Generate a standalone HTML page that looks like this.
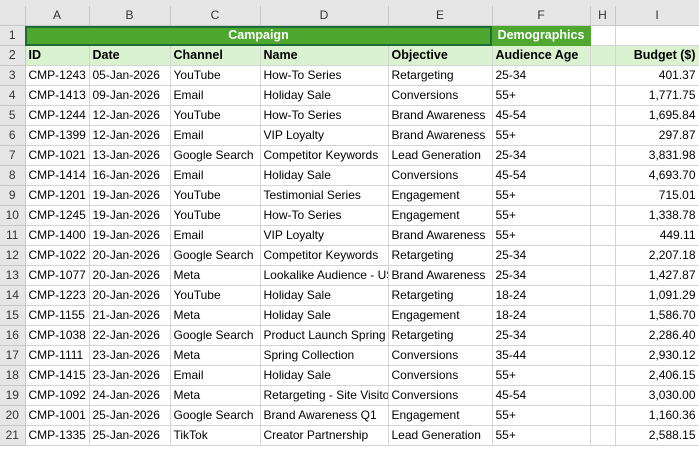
<!DOCTYPE html><html><head><style>
body{margin:0;width:699px;height:449px;overflow:hidden;background:#fff;font-family:"Liberation Sans",sans-serif;font-size:12px;color:#000}
table{border-collapse:collapse;table-layout:fixed;position:absolute;left:0;top:6px;width:699px}
td{height:19px;border-right:1px solid #d4d4d4;border-bottom:1px solid #d4d4d4;padding:0 3px;white-space:nowrap;overflow:hidden;line-height:19px}
.ch td{background:#e6e6e6;color:#333;text-align:center;height:18px;border-color:#c8c8c8;font-size:12px}
td.rh{background:#e6e6e6;color:#333;text-align:center;border-color:#c8c8c8;padding:0;font-size:12px}
.r1 td.g{background:#4ea72e;color:#fff;font-weight:bold;text-align:center;font-size:12.5px;border-color:#4ea72e}
.r2 td{background:#daf2d0;font-weight:bold;font-size:12.5px}
.r td.n{text-align:right}
</style></head><body>
<div style="position:absolute;left:0;top:0;width:699px;height:6px;background:#e6e6e6"></div>
<table>
<colgroup><col style="width:25px"><col style="width:64px"><col style="width:81px"><col style="width:90px"><col style="width:128px"><col style="width:104px"><col style="width:98px"><col style="width:25px"><col style="width:84px"></colgroup>
<tr class="ch"><td></td><td>A</td><td>B</td><td>C</td><td>D</td><td>E</td><td>F</td><td>H</td><td>I</td></tr>
<tr class="r1"><td class="rh">1</td><td class="g" colspan="5" style="outline:2px solid #1e6b3a;outline-offset:-2px">Campaign</td><td class="g">Demographics</td><td></td><td></td></tr>
<tr class="r2"><td class="rh" style="font-weight:normal;background:#e6e6e6">2</td><td>ID</td><td>Date</td><td>Channel</td><td>Name</td><td>Objective</td><td>Audience Age</td><td></td><td style="text-align:right">Budget ($)</td></tr>
<tr class="r"><td class="rh">3</td><td>CMP-1243</td><td>05-Jan-2026</td><td>YouTube</td><td>How-To Series</td><td>Retargeting</td><td>25-34</td><td></td><td class="n">401.37</td></tr>
<tr class="r"><td class="rh">4</td><td>CMP-1413</td><td>09-Jan-2026</td><td>Email</td><td>Holiday Sale</td><td>Conversions</td><td>55+</td><td></td><td class="n">1,771.75</td></tr>
<tr class="r"><td class="rh">5</td><td>CMP-1244</td><td>12-Jan-2026</td><td>YouTube</td><td>How-To Series</td><td>Brand Awareness</td><td>45-54</td><td></td><td class="n">1,695.84</td></tr>
<tr class="r"><td class="rh">6</td><td>CMP-1399</td><td>12-Jan-2026</td><td>Email</td><td>VIP Loyalty</td><td>Brand Awareness</td><td>55+</td><td></td><td class="n">297.87</td></tr>
<tr class="r"><td class="rh">7</td><td>CMP-1021</td><td>13-Jan-2026</td><td>Google Search</td><td>Competitor Keywords</td><td>Lead Generation</td><td>25-34</td><td></td><td class="n">3,831.98</td></tr>
<tr class="r"><td class="rh">8</td><td>CMP-1414</td><td>16-Jan-2026</td><td>Email</td><td>Holiday Sale</td><td>Conversions</td><td>45-54</td><td></td><td class="n">4,693.70</td></tr>
<tr class="r"><td class="rh">9</td><td>CMP-1201</td><td>19-Jan-2026</td><td>YouTube</td><td>Testimonial Series</td><td>Engagement</td><td>55+</td><td></td><td class="n">715.01</td></tr>
<tr class="r"><td class="rh">10</td><td>CMP-1245</td><td>19-Jan-2026</td><td>YouTube</td><td>How-To Series</td><td>Engagement</td><td>55+</td><td></td><td class="n">1,338.78</td></tr>
<tr class="r"><td class="rh">11</td><td>CMP-1400</td><td>19-Jan-2026</td><td>Email</td><td>VIP Loyalty</td><td>Brand Awareness</td><td>55+</td><td></td><td class="n">449.11</td></tr>
<tr class="r"><td class="rh">12</td><td>CMP-1022</td><td>20-Jan-2026</td><td>Google Search</td><td>Competitor Keywords</td><td>Retargeting</td><td>25-34</td><td></td><td class="n">2,207.18</td></tr>
<tr class="r"><td class="rh">13</td><td>CMP-1077</td><td>20-Jan-2026</td><td>Meta</td><td>Lookalike Audience - US</td><td>Brand Awareness</td><td>25-34</td><td></td><td class="n">1,427.87</td></tr>
<tr class="r"><td class="rh">14</td><td>CMP-1223</td><td>20-Jan-2026</td><td>YouTube</td><td>Holiday Sale</td><td>Retargeting</td><td>18-24</td><td></td><td class="n">1,091.29</td></tr>
<tr class="r"><td class="rh">15</td><td>CMP-1155</td><td>21-Jan-2026</td><td>Meta</td><td>Holiday Sale</td><td>Engagement</td><td>18-24</td><td></td><td class="n">1,586.70</td></tr>
<tr class="r"><td class="rh">16</td><td>CMP-1038</td><td>22-Jan-2026</td><td>Google Search</td><td>Product Launch Spring</td><td>Retargeting</td><td>25-34</td><td></td><td class="n">2,286.40</td></tr>
<tr class="r"><td class="rh">17</td><td>CMP-1111</td><td>23-Jan-2026</td><td>Meta</td><td>Spring Collection</td><td>Conversions</td><td>35-44</td><td></td><td class="n">2,930.12</td></tr>
<tr class="r"><td class="rh">18</td><td>CMP-1415</td><td>23-Jan-2026</td><td>Email</td><td>Holiday Sale</td><td>Conversions</td><td>55+</td><td></td><td class="n">2,406.15</td></tr>
<tr class="r"><td class="rh">19</td><td>CMP-1092</td><td>24-Jan-2026</td><td>Meta</td><td>Retargeting - Site Visitors</td><td>Conversions</td><td>45-54</td><td></td><td class="n">3,030.00</td></tr>
<tr class="r"><td class="rh">20</td><td>CMP-1001</td><td>25-Jan-2026</td><td>Google Search</td><td>Brand Awareness Q1</td><td>Engagement</td><td>55+</td><td></td><td class="n">1,160.36</td></tr>
<tr class="r"><td class="rh">21</td><td>CMP-1335</td><td>25-Jan-2026</td><td>TikTok</td><td>Creator Partnership</td><td>Lead Generation</td><td>55+</td><td></td><td class="n">2,588.15</td></tr>
</table>
</body></html>
